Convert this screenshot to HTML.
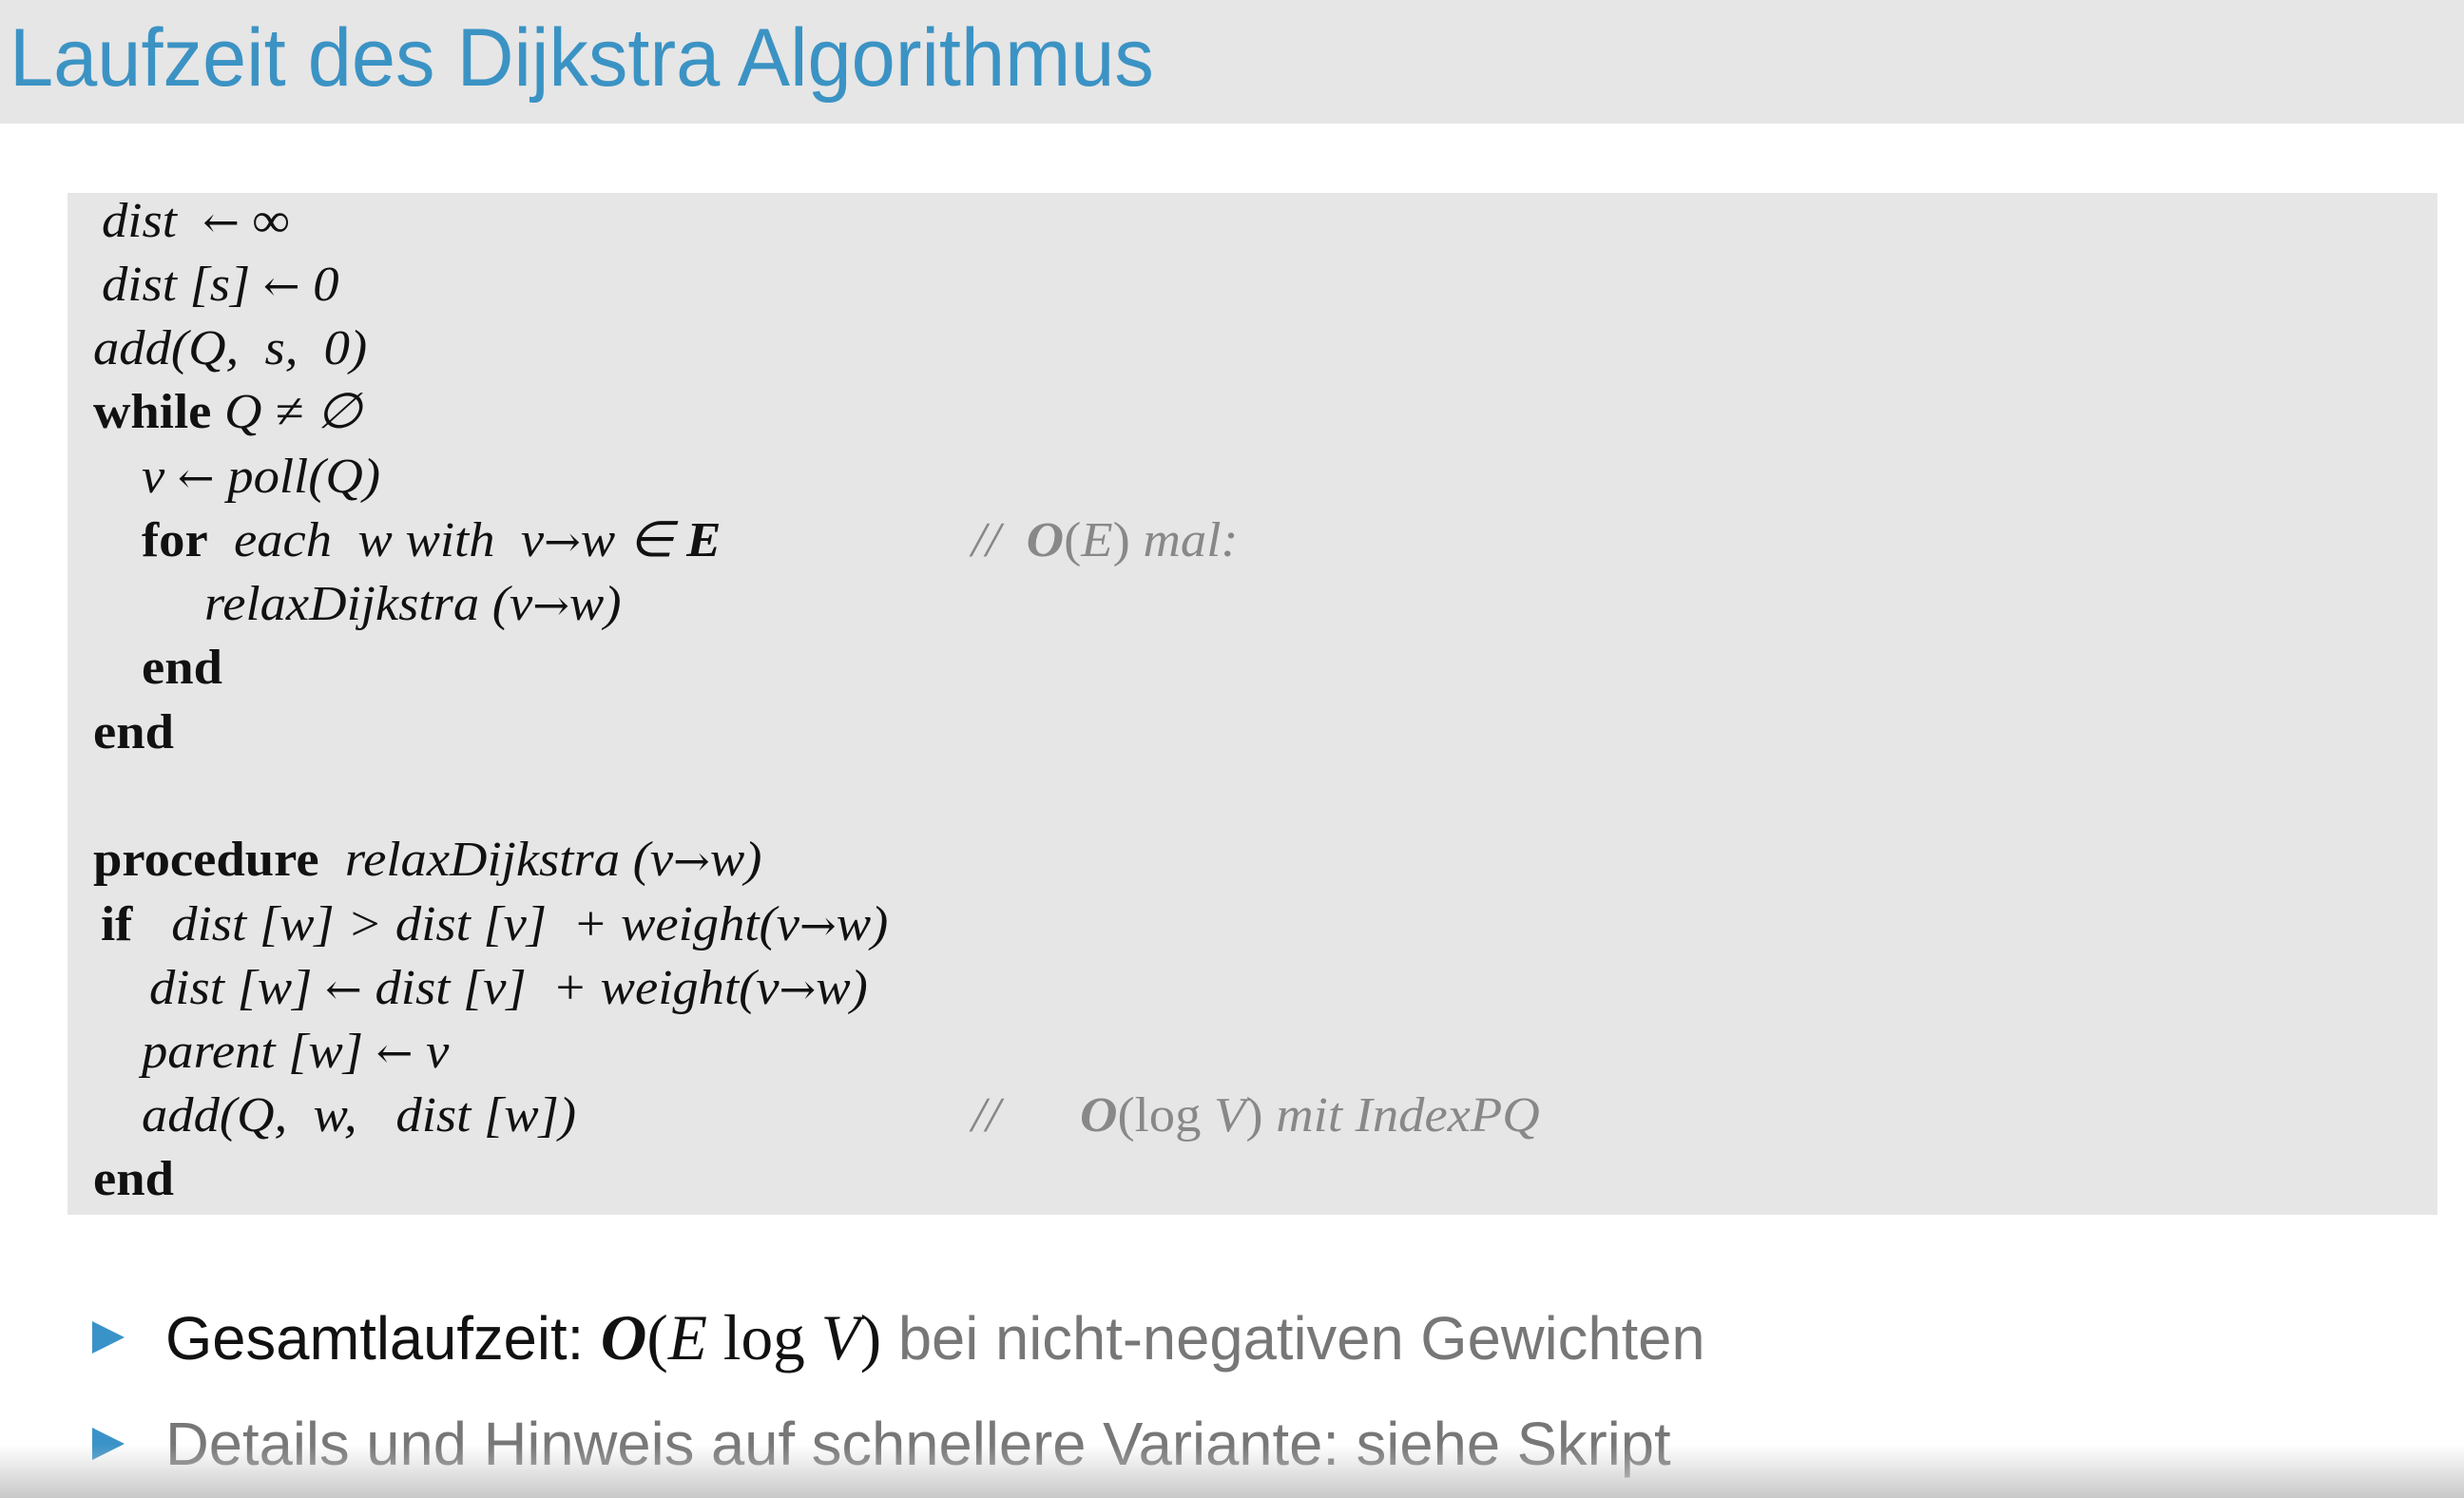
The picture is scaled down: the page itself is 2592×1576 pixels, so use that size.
<!DOCTYPE html>
<html><head><meta charset="utf-8"><style>
html,body{margin:0;padding:0}
body{width:2592px;height:1576px;position:relative;overflow:hidden;background:#fff;font-family:"Liberation Serif",serif}
#hdr{position:absolute;left:0;top:0;width:2592px;height:130px;background:#e6e6e6}
#title{position:absolute;left:10px;top:11px;font-family:"Liberation Sans",sans-serif;font-size:86px;line-height:100px;color:#3b93c4;transform:scaleX(0.965);transform-origin:0 0;white-space:nowrap}
#box{position:absolute;left:71px;top:203px;width:2493px;height:1075px;background:#e6e6e6}
.l{position:absolute;font-size:52px;line-height:60px;font-style:italic;white-space:pre;color:#111;transform:scaleX(1.05);transform-origin:0 0}
.l b{font-style:normal;font-weight:bold}
.a{font-family:"DejaVu Serif",serif;font-style:normal;font-size:44px}
.c{color:#888}
.c b{font-style:italic}
.bul{position:absolute;left:97px;width:0;height:0;border-top:17px solid transparent;border-bottom:17px solid transparent;border-left:34px solid #3a93c8}
.bt{position:absolute;left:174px;font-family:"Liberation Sans",sans-serif;font-size:64px;line-height:70px;white-space:nowrap;color:#777;transform:scaleX(0.99);transform-origin:0 0}
.bt .m{font-family:"Liberation Serif",serif;color:#111;font-size:68px}
#fade{position:absolute;left:0;top:1520px;width:2592px;height:56px;background:linear-gradient(#fff0,#c8c8c8)}
</style></head><body>
<div id="hdr"></div>
<div id="title">Laufzeit des Dijkstra Algorithmus</div>
<div id="box"></div>
<div class="l" style="left:107px;top:203px">dist  <span class="a">←</span> ∞</div>
<div class="l" style="left:107px;top:270px">dist [s] <span class="a">←</span> 0</div>
<div class="l" style="left:98px;top:337px">add(Q,  s,  0)</div>
<div class="l" style="left:98px;top:404px"><b>while</b> Q ≠ ∅</div>
<div class="l" style="left:149px;top:472px">v <span class="a">←</span> poll(Q)</div>
<div class="l" style="left:149px;top:539px"><b>for</b>  each  w with  v<span class="a">→</span>w ∈ <b style="font-style:italic">E</b></div>
<div class="l c" style="left:1022px;top:539px">//  <b>O</b><span style="font-style:normal">(</span>E<span style="font-style:normal">)</span> mal:</div>
<div class="l" style="left:215px;top:606px">relaxDijkstra (v<span class="a">→</span>w)</div>
<div class="l" style="left:149px;top:673px"><b>end</b></div>
<div class="l" style="left:98px;top:741px"><b>end</b></div>
<div class="l" style="left:98px;top:875px"><b>procedure</b>  relaxDijkstra (v<span class="a">→</span>w)</div>
<div class="l" style="left:106px;top:943px"><b>if</b>   dist [w] &gt; dist [v]  + weight(v<span class="a">→</span>w)</div>
<div class="l" style="left:157px;top:1010px">dist [w] <span class="a">←</span> dist [v]  + weight(v<span class="a">→</span>w)</div>
<div class="l" style="left:149px;top:1077px">parent [w] <span class="a">←</span> v</div>
<div class="l" style="left:149px;top:1144px">add(Q,  w,   dist [w])</div>
<div class="l c" style="left:1022px;top:1144px">//</div>
<div class="l c" style="left:1136px;top:1144px"><b>O</b><span style="font-style:normal">(log </span>V<span style="font-style:normal">)</span> mit IndexPQ</div>
<div class="l" style="left:98px;top:1211px"><b>end</b></div>
<div class="bul" style="top:1390px"></div>
<div class="bt" style="top:1372px"><span style="color:#111">Gesamtlaufzeit:  </span><span class="m"><b><i>O</i></b>(<i>E</i> log <i>V</i>)</span> bei nicht-negativen Gewichten</div>
<div class="bul" style="top:1502px"></div>
<div class="bt" style="top:1484px">Details und Hinweis auf schnellere Variante: siehe Skript</div>
<div id="fade"></div>
</body></html>
